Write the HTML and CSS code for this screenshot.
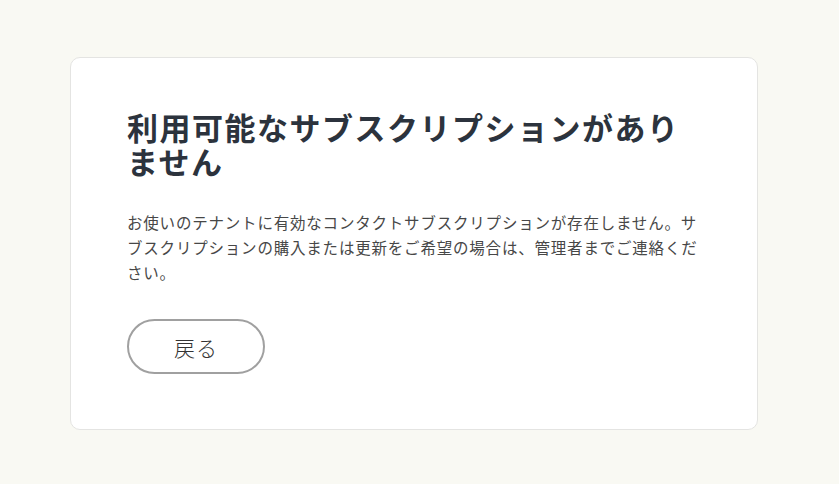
FILE: index.html
```html
<!DOCTYPE html>
<html lang="ja">
<head>
<meta charset="utf-8">
<title>利用可能なサブスクリプションがありません</title>
<link rel="stylesheet" href="styles.css">
</head>
<body>
<main class="page">
  <section class="card">
    <h1 class="title">利用可能なサブスクリプションがありません</h1>
    <p class="message">お使いのテナントに有効なコンタクトサブスクリプションが存在しません。サブスクリプションの購入または更新をご希望の場合は、管理者までご連絡ください。</p>
    <button class="back" type="button">戻る</button>
  </section>
</main>
</body>
</html>
```

FILE: styles.css
```css
html, body {
  margin: 0;
  padding: 0;
  background: #f9f9f3;
}
body {
  font-family: "Noto Sans CJK JP", "Noto Sans", sans-serif;
}
.page {
  padding: 57px 0 0 70px;
}
.card {
  box-sizing: border-box;
  width: 688px;
  height: 373px;
  background: #ffffff;
  border: 1.5px solid #e4e4e2;
  border-radius: 10px;
  padding: 52px 56px 0 56px;
  display: flex;
  flex-direction: column;
  align-items: flex-start;
}
.title {
  margin: 0;
  font-size: 31px;
  line-height: 34px;
  font-weight: 700;
  letter-spacing: 1.5px;
  color: #2c333d;
  width: 576px;
}
.message {
  margin: 32px 0 0 0;
  font-size: 15.5px;
  line-height: 25px;
  letter-spacing: 0.8px;
  color: #474747;
  width: 576px;
}
.back {
  margin-top: 34px;
  width: 138px;
  height: 55px;
  border: 2px solid #a0a0a0;
  border-radius: 28px;
  background: #ffffff;
  font-family: inherit;
  font-size: 21px;
  font-weight: 300;
  color: #333333;
  padding: 0;
  letter-spacing: 1px;
}
```
